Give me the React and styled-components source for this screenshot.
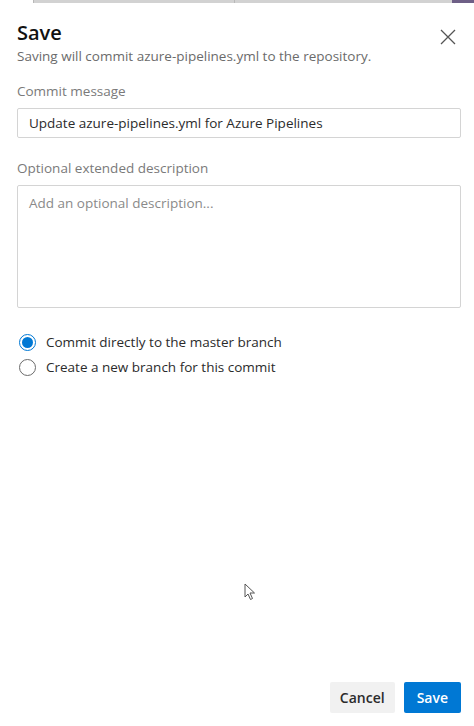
import React, { useState } from 'react';
import styled, { createGlobalStyle } from 'styled-components';

const GlobalStyle = createGlobalStyle`
  html, body { margin: 0; padding: 0; background: #fff; }
  body { font-family: 'Segoe UI', 'Open Sans', 'Noto Sans', sans-serif; }
  * { box-sizing: border-box; }
`;

const Panel = styled.div`
  height: 726px;
  display: flex;
  flex-direction: column;
  position: relative;
  background: #fff;
`;

const TopStrip = styled.div`
  height: 3px;
  display: flex;
`;

const StripSeg = styled.div`
  flex: ${p => p.grow || 'none'};
  width: ${p => p.w ? p.w + 'px' : 'auto'};
  background: ${p => p.color};
  border-left: ${p => p.tick ? '1px solid #b8b8b8' : 'none'};
`;

const Header = styled.div`
  display: flex;
  justify-content: space-between;
  align-items: flex-start;
  padding: 17px 17px 0 17px;
`;

const Title = styled.h1`
  margin: 0;
  font-size: 20px;
  font-weight: 600;
  color: #111;
  line-height: 26px;
`;

const Subtitle = styled.div`
  font-size: 13.5px;
  color: #6b6b6b;
  line-height: 20px;
`;

const CloseButton = styled.button`
  border: none;
  background: none;
  padding: 0;
  margin-top: 8px;
  width: 18px;
  height: 18px;
  cursor: pointer;
  color: #555;
`;

const Body = styled.div`
  padding: 0 13px 0 17px;
  flex: 1;
`;

const Label = styled.div`
  font-size: 13.5px;
  color: #7a7a7a;
  line-height: 20px;
  margin-top: ${p => p.mt}px;
  margin-bottom: 7px;
`;

const TextInput = styled.input`
  width: 100%;
  height: 30px;
  border: 1px solid #d4d4d4;
  border-radius: 2px;
  padding: 0 11px;
  font-family: inherit;
  font-size: 13.5px;
  color: #2b2b2b;
  outline: none;
`;

const TextArea = styled.textarea`
  display: block;
  width: 100%;
  height: 123px;
  border: 1px solid #d4d4d4;
  border-radius: 2px;
  padding: 7px 11px;
  font-family: inherit;
  font-size: 13.5px;
  line-height: 20px;
  color: #2b2b2b;
  resize: none;
  outline: none;
  &::placeholder { color: #8a8a8a; }
`;

const RadioGroup = styled.div`
  margin-top: 24px;
  display: flex;
  flex-direction: column;
  gap: 5px;
`;

const RadioRow = styled.label`
  display: flex;
  align-items: center;
  gap: 10px;
  font-size: 13.5px;
  color: #2b2b2b;
  line-height: 20px;
  cursor: pointer;
  padding-left: 2px;
`;

const RadioDot = styled.span`
  width: 17px;
  height: 17px;
  border-radius: 50%;
  border: 1px solid ${p => p.checked ? '#0078d4' : '#6b6b6b'};
  display: flex;
  align-items: center;
  justify-content: center;
  &::after {
    content: '';
    width: 11px;
    height: 11px;
    border-radius: 50%;
    background: ${p => p.checked ? '#0078d4' : 'transparent'};
  }
`;

const Footer = styled.div`
  display: flex;
  justify-content: flex-end;
  gap: 9px;
  padding: 0 13px 13px 0;
`;

const Button = styled.button`
  height: 31px;
  padding: 0 ${p => p.primary ? 13 : 10}px;
  border: none;
  border-radius: 2px;
  font-family: inherit;
  font-size: 14px;
  font-weight: 600;
  background: ${p => p.primary ? '#0078d4' : '#f1f1f1'};
  color: ${p => p.primary ? '#fff' : '#2b2b2b'};
  cursor: pointer;
`;

const Pointer = styled.svg`
  position: absolute;
  left: 244px;
  top: 583px;
`;

const options = [
  { id: 'direct', label: 'Commit directly to the master branch' },
  { id: 'branch', label: 'Create a new branch for this commit' },
];

export default function App() {
  const [choice, setChoice] = useState('direct');
  return (
    <>
      <GlobalStyle />
      <Panel>
        <TopStrip>
          <StripSeg w={33} color="#fff" />
          <StripSeg w={201} color="#d2d2d2" tick />
          <StripSeg grow={1} color="#d2d2d2" tick />
          <StripSeg w={22} color="#6e5f86" />
        </TopStrip>
        <Header>
          <div>
            <Title>Save</Title>
            <Subtitle>Saving will commit azure-pipelines.yml to the repository.</Subtitle>
          </div>
          <CloseButton aria-label="Close">
            <svg width="18" height="18" viewBox="0 0 18 18">
              <path d="M2 2 L16 16 M16 2 L2 16" stroke="#555" strokeWidth="1.3" fill="none" />
            </svg>
          </CloseButton>
        </Header>
        <Body>
          <Label mt={15}>Commit message</Label>
          <TextInput defaultValue="Update azure-pipelines.yml for Azure Pipelines" />
          <Label mt={20}>Optional extended description</Label>
          <TextArea placeholder="Add an optional description..." />
          <RadioGroup>
            {options.map(o => (
              <RadioRow key={o.id} onClick={() => setChoice(o.id)}>
                <RadioDot checked={choice === o.id} />
                {o.label}
              </RadioRow>
            ))}
          </RadioGroup>
        </Body>
        <Footer>
          <Button>Cancel</Button>
          <Button primary>Save</Button>
        </Footer>
        <Pointer width="12" height="18" viewBox="0 0 12 18">
          <path d="M1 1 L1 14 L4 11 L6.5 16.5 L8.5 15.5 L6 10 L10.5 10 Z" fill="#fff" stroke="#555" strokeWidth="1" />
        </Pointer>
      </Panel>
    </>
  );
}
